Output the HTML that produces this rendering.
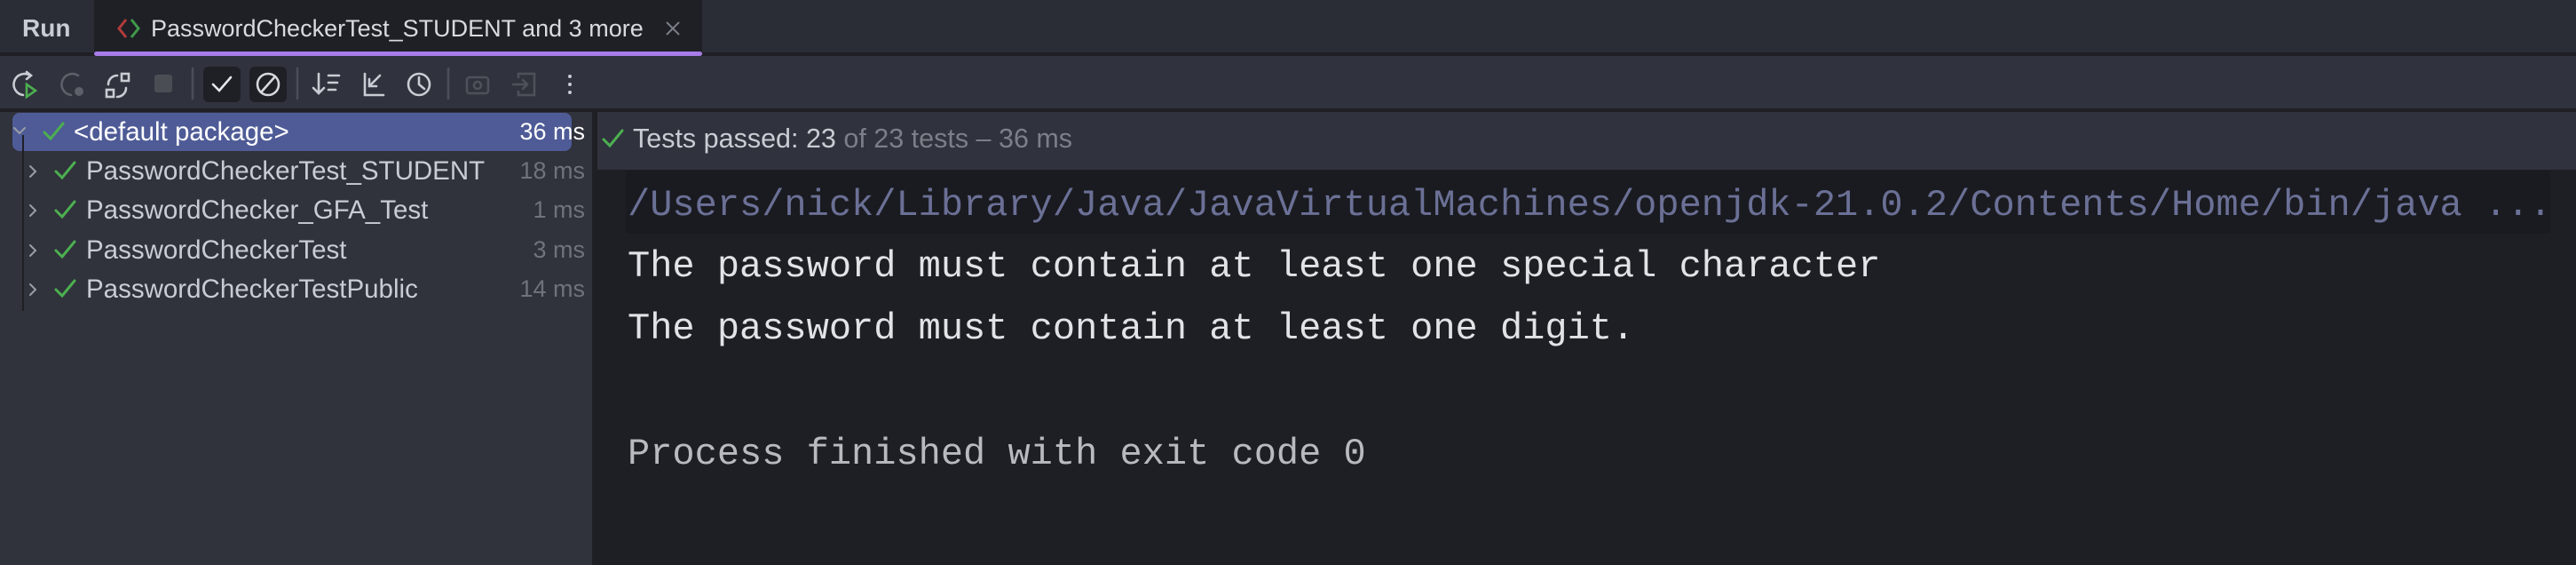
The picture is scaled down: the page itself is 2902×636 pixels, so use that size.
<!DOCTYPE html>
<html><head><meta charset="utf-8"><style>
*{margin:0;padding:0;box-sizing:border-box}
body{width:2902px;height:636px;background:#1e1f24;overflow:hidden;position:relative;font-family:"Liberation Sans",sans-serif}
.abs{position:absolute}
.tabbar{left:0;top:0;width:2902px;height:62px;background:#2b2d36;border-bottom:3px solid #1f2025}
.toolbar{left:0;top:63px;width:2902px;height:62px;background:#30323d;border-bottom:3px solid #1f2025}
.left{left:0;top:126px;width:670px;height:510px;background:#30323c;border-right:3px solid #1f2025}
.rhead{left:673px;top:126px;width:2232px;height:65px;background:#30323d}
.t{font-size:29.5px;color:#c9ccd3;white-space:nowrap}
.ms{font-size:27px;color:#6f737c;white-space:nowrap;text-align:right;width:120px}
.mono{font-family:"Liberation Mono",monospace;font-size:42px;white-space:pre;color:#e2e3e6;left:707px}
</style></head><body>
<div class="abs tabbar"></div>
<div class="abs" style="left:106px;top:0;width:685px;height:62px;background:#1f2026"></div>
<div class="abs" style="left:106px;top:58px;width:685px;height:5px;background:#a77be8;border-radius:3px"></div>
<div class="abs t" style="left:25px;top:16px;font-weight:bold;font-size:28px">Run</div>
<svg class="abs" style="left:130px;top:18px" width="30" height="28"><path d="M12 4 L4 14 L12 24" stroke="#b23b3b" stroke-width="3" fill="none"/><path d="M18 4 L26 14 L18 24" stroke="#3f9a4a" stroke-width="3" fill="none"/></svg>
<div class="abs t" style="left:170px;top:17px;color:#d8dadf;font-size:27px">PasswordCheckerTest_STUDENT and 3 more</div>
<svg class="abs" style="left:748px;top:22px" width="20" height="20"><path d="M3 3 L17 17 M17 3 L3 17" stroke="#7b7f88" stroke-width="2"/></svg>

<div class="abs toolbar"></div>
<svg class="abs" style="left:0;top:63px" width="700" height="62" fill="none" stroke-width="2.6" stroke-linecap="round">
<path d="M34 22 A12 12 0 1 0 26 44" stroke="#c9ccd3"/><path d="M30 18 L35 22 L30 26" stroke="#c9ccd3"/><path d="M30 32 L40 39 L30 46Z" stroke="#4caf50"/>
<path d="M88 22 A12 12 0 1 0 80 44" stroke="#5d6068"/><circle cx="89" cy="40" r="5" fill="#5d6068" stroke="none"/>
<rect x="137" y="20" width="8" height="8" stroke="#c9ccd3"/><rect x="120" y="38" width="8" height="8" stroke="#c9ccd3"/><path d="M122 32 A10 10 0 0 1 132 22 M142 36 A10 10 0 0 1 132 46" stroke="#c9ccd3"/>
<rect x="174" y="21" width="20" height="20" rx="3" fill="#4b4d55" stroke="none"/>
<path d="M217 14 V48" stroke="#4b4e58"/>
<rect x="229" y="12" width="42" height="40" rx="6" fill="#1f2026" stroke="none"/><path d="M240 32 L247 39 L260 24" stroke="#e6e7ea"/>
<rect x="281" y="12" width="42" height="40" rx="6" fill="#1f2026" stroke="none"/><circle cx="302" cy="32" r="12" stroke="#d6d8dc"/><path d="M294 41 L310 23" stroke="#d6d8dc"/>
<path d="M335 14 V48" stroke="#4b4e58"/>
<path d="M359 20 V42 M353 36 L359 42 L365 36 M370 22 H382 M370 30 H380 M370 38 H378" stroke="#c9ccd3"/>
<path d="M411 20 V44 H432 M428 22 L416 34 M416 26 V34 H424" stroke="#c9ccd3"/>
<circle cx="472" cy="32" r="12" stroke="#c9ccd3"/><path d="M472 24 V32 L478 37" stroke="#c9ccd3"/>
<path d="M505 14 V48" stroke="#4b4e58"/>
<rect x="526" y="24" width="24" height="18" rx="3" stroke="#4e5159"/><circle cx="538" cy="33" r="4" stroke="#4e5159"/>
<path d="M584 24 V20 H602 V44 H584 V40 M578 32 H594 M589 27 L594 32 L589 37" stroke="#4e5159"/>
<circle cx="642" cy="23" r="2" fill="#c9ccd3" stroke="none"/><circle cx="642" cy="32" r="2" fill="#c9ccd3" stroke="none"/><circle cx="642" cy="41" r="2" fill="#c9ccd3" stroke="none"/>
</svg>

<div class="abs left"></div>
<div class="abs" style="left:14px;top:127px;width:630px;height:43px;background:#4e5b96;border-radius:8px"></div>
<div class="abs" style="left:25px;top:152px;width:2px;height:198px;background:#1f2026"></div>
<svg class="abs" style="left:0;top:127px" width="120" height="230" fill="none" stroke-width="3" stroke-linecap="round">
<path d="M16 17 L22 23 L28 17" stroke="#9a9ea6" stroke-width="2"/>
<path d="M50 22 L57 29 L71 12" stroke="#4caf50"/>
<g stroke="#9a9ea6" stroke-width="2"><path d="M34 60 L40 66 L34 72"/><path d="M34 104 L40 110 L34 116"/><path d="M34 149 L40 155 L34 161"/><path d="M34 193 L40 199 L34 205"/></g>
<g stroke="#4caf50"><path d="M63 66 L70 73 L84 56"/><path d="M63 110 L70 117 L84 100"/><path d="M63 155 L70 162 L84 145"/><path d="M63 199 L70 206 L84 189"/></g>
</svg>
<div class="abs t" style="left:83px;top:132px;color:#fff">&lt;default package&gt;</div>
<div class="abs ms" style="left:539px;top:133px;color:#fff">36 ms</div>
<div class="abs t" style="left:97px;top:176px">PasswordCheckerTest_STUDENT</div><div class="abs ms" style="left:539px;top:177px">18 ms</div>
<div class="abs t" style="left:97px;top:220px">PasswordChecker_GFA_Test</div><div class="abs ms" style="left:539px;top:221px">1 ms</div>
<div class="abs t" style="left:97px;top:265px">PasswordCheckerTest</div><div class="abs ms" style="left:539px;top:266px">3 ms</div>
<div class="abs t" style="left:97px;top:309px">PasswordCheckerTestPublic</div><div class="abs ms" style="left:539px;top:310px">14 ms</div>

<div class="abs rhead"></div>
<svg class="abs" style="left:676px;top:142px" width="30" height="28" fill="none"><path d="M4 15 L11 22 L25 5" stroke="#4caf50" stroke-width="3" stroke-linecap="round"/></svg>
<div class="abs t" style="left:713px;top:139px;font-size:30.5px">Tests passed: 23 <span style="color:#7b7f88">of 23 tests – 36 ms</span></div>

<div class="abs" style="left:705px;top:192px;width:2168px;height:71px;background:#1a1b20"></div>
<div class="abs mono" style="top:207px;color:#6b7096">/Users/nick/Library/Java/JavaVirtualMachines/openjdk-21.0.2/Contents/Home/bin/java ...</div>
<div class="abs mono" style="top:276px">The password must contain at least one special character</div>
<div class="abs mono" style="top:346px">The password must contain at least one digit.</div>
<div class="abs mono" style="top:487px;color:#b8babf">Process finished with exit code 0</div>
</body></html>
